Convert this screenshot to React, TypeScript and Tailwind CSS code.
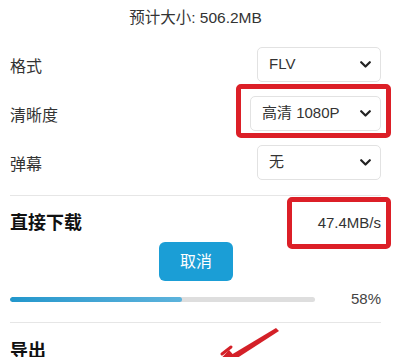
import { ReactNode } from 'react';

const font = { fontFamily: '"Liberation Sans", "Noto Sans CJK SC", sans-serif' };

const Chevron = () => (
  <svg width="11" height="7" viewBox="0 0 11 7" fill="none">
    <polyline points="1.2,1.2 5.5,5.5 9.8,1.2" stroke="#222" strokeWidth="2.2" strokeLinecap="round" strokeLinejoin="round" />
  </svg>
);

const Select = ({ value, width }: { value: string; width: string }) => (
  <div className={`${width} h-[35px] flex items-center justify-between pl-[11px] pr-[9px] border border-[#e2e2e2] rounded-[5px] bg-white text-[15px] text-[#333]`}>
    <span>{value}</span>
    <Chevron />
  </div>
);

const Row = ({ label, children }: { label: string; children: ReactNode }) => (
  <div className="flex items-center justify-between h-[35px]">
    <span className="text-[16px] text-[#333] pt-[4px]">{label}</span>
    {children}
  </div>
);

export default function App() {
  return (
    <div className="relative w-[400px] h-[357px] overflow-hidden bg-white pl-[10px] pr-[19px]" style={font}>
      <div className="pt-[7px] text-center text-[15.5px] leading-[22px] text-[#333]">预计大小: 506.2MB</div>

      <div className="mt-[18px] flex flex-col gap-[14px]">
        <Row label="格式">
          <Select value="FLV" width="w-[124px]" />
        </Row>
        <Row label="清晰度">
          <Select value="高清 1080P" width="w-[131px]" />
        </Row>
        <Row label="弹幕">
          <Select value="无" width="w-[124px]" />
        </Row>
      </div>

      <div className="mt-[15px] border-t border-[#e6e6e6]" />

      <div className="mt-[14px] h-[26px] flex items-center justify-between">
        <span className="text-[18px] font-bold text-[#111]">直接下载</span>
        <span className="text-[15px] text-[#333]">47.4MB/s</span>
      </div>

      <div className="mt-[6px] flex justify-center">
        <button className="w-[74px] h-[39px] rounded-[6px] bg-[#1b9ed6] text-white text-[16px] ml-[1px]">取消</button>
      </div>

      <div className="mt-[8px] h-[20px] flex items-center justify-between">
        <div className="w-[305px] h-[5px] rounded-full bg-[#dedede] overflow-hidden">
          <div className="w-[172px] h-full rounded-full bg-gradient-to-r from-[#2197cc] to-[#5cb3dc]" />
        </div>
        <span className="text-[15px] text-[#444]">58%</span>
      </div>

      <div className="mt-[13px] border-t border-[#e6e6e6]" />

      <div className="mt-[15px] text-[18px] leading-[26px] font-bold text-[#111]">导出</div>

      {/* red highlight boxes */}
      <div className="absolute left-[236px] top-[84px] w-[155px] h-[54px] border-[5px] border-[#dc1f27] rounded-[5px]" />
      <div className="absolute left-[287px] top-[197px] w-[104px] h-[52px] border-[5px] border-[#dc1f27] rounded-[5px]" />

      {/* red arrow */}
      <svg className="absolute left-0 top-0" width="400" height="357" viewBox="0 0 400 357" fill="none">
        <path d="M279 331 L276 328 L226 358 L231 362 Z" fill="#d42028" />
        <path d="M229 350 L213 367 L239 361 Z" fill="#d42028" />
        <path d="M222 354 L231 347" stroke="#d42028" strokeWidth="3" strokeLinecap="round" />
      </svg>
    </div>
  );
}
